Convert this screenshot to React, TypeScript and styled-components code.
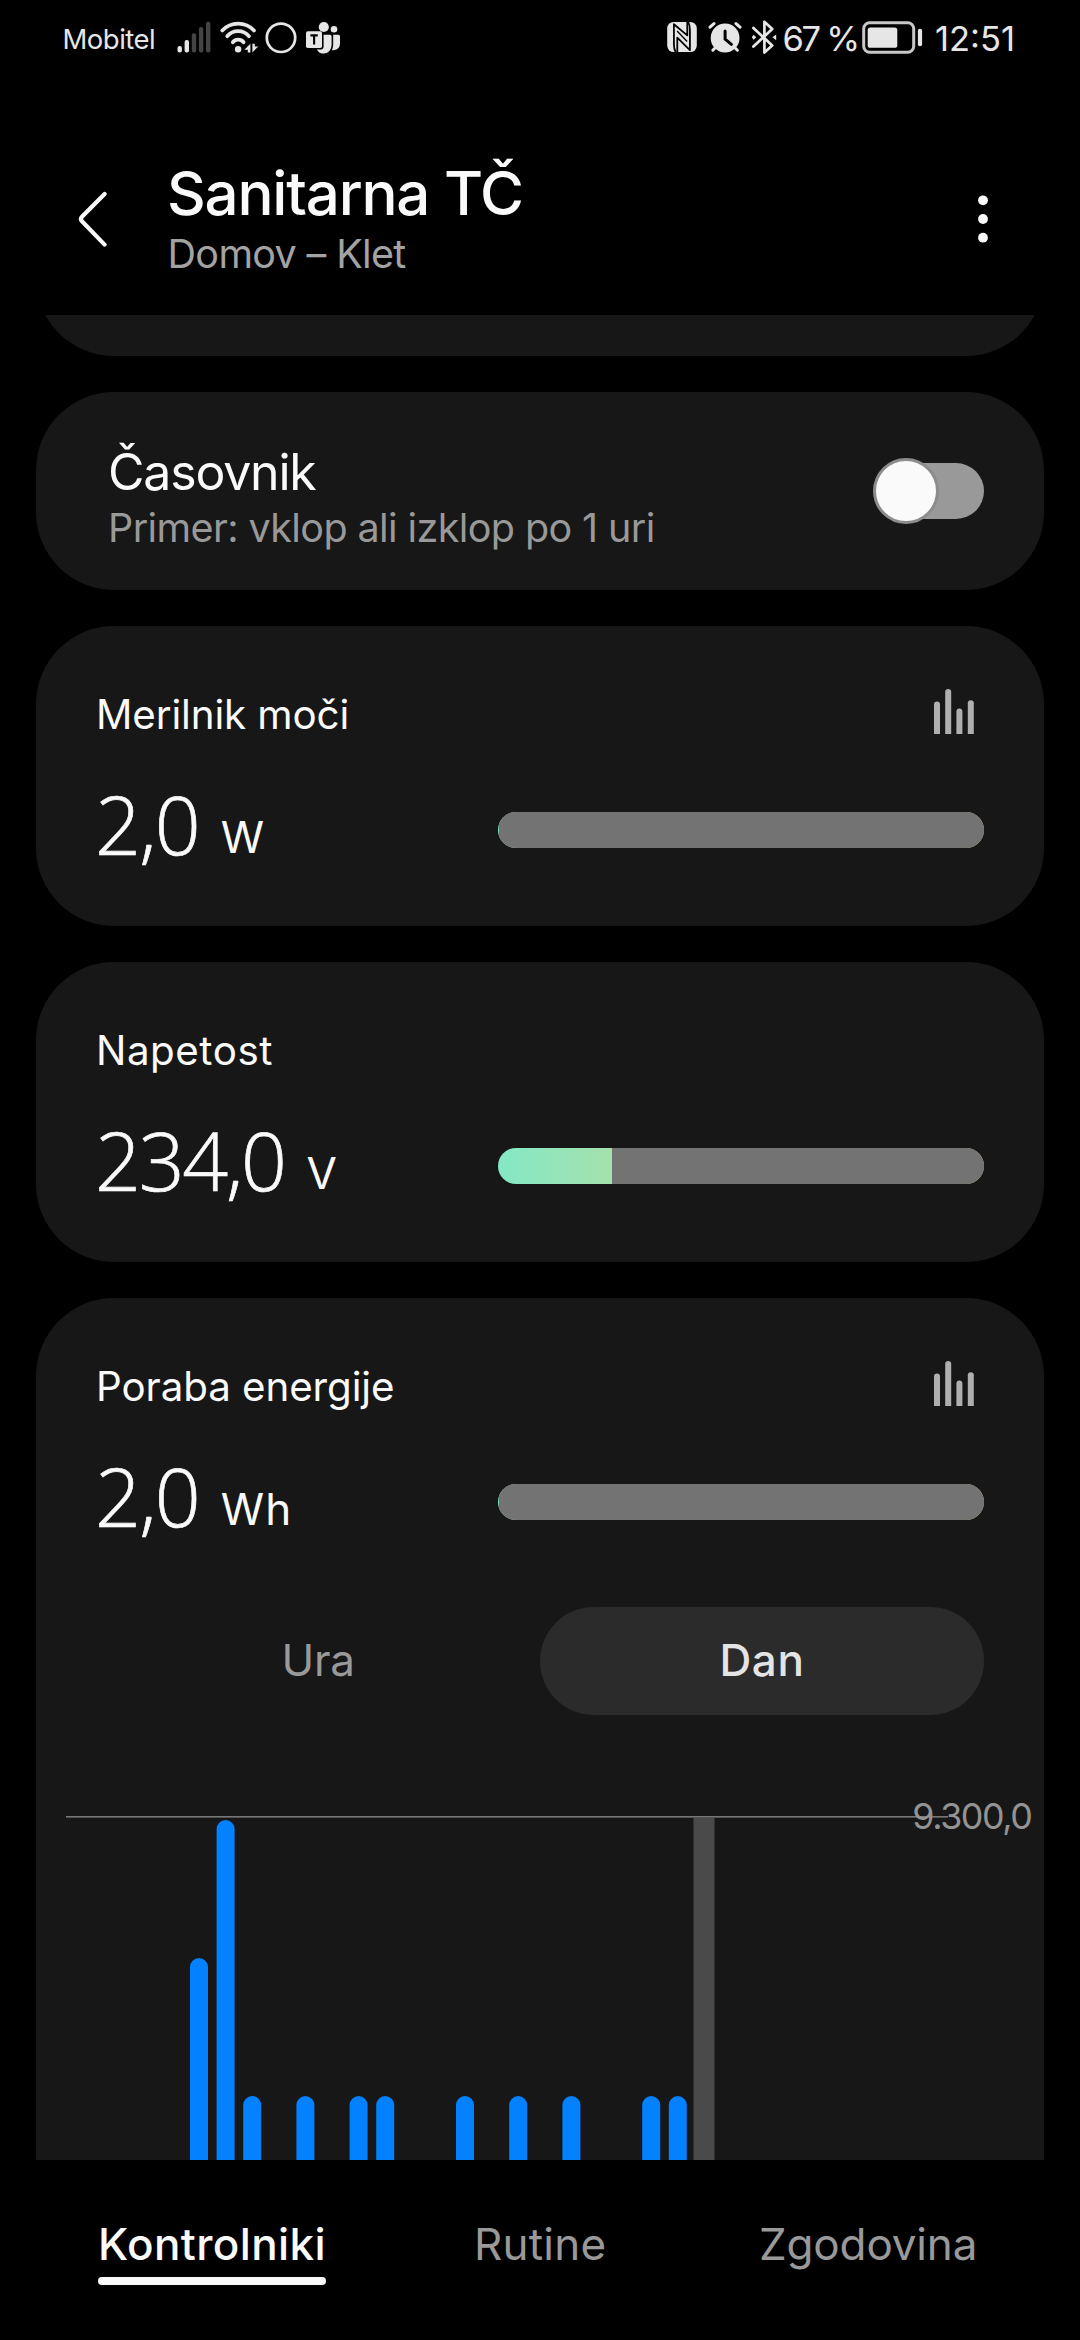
import React from "react";
import styled, { createGlobalStyle } from "styled-components";

const INK = "#fafafa";
const CARD = "#171717";
const MUTED = "#999999";
const STATUS = "#e6e6e6";

const GlobalStyle = createGlobalStyle`
  body {
    margin: 0;
    background: #000;
    color: ${INK};
    font-family: Inter, "Noto Sans", sans-serif;
  }
`;

const Screen = styled.div`
  width: 1080px;
  height: 2340px;
  display: flex;
  flex-direction: column;
  background: #000;
  overflow: hidden;
`;

/* ---------- status bar ---------- */

const StatusBar = styled.div`
  height: 78px;
  box-sizing: border-box;
  padding: 0 67px 0 62.5px;
  display: flex;
  justify-content: space-between;
  align-items: center;
  color: ${STATUS};
`;

const StatusGroup = styled.div`
  display: flex;
  align-items: center;
`;

const Label = styled.span<{ $size: number; $spacing?: number; $weight?: number }>`
  font-size: ${(p) => p.$size}px;
  font-weight: ${(p) => p.$weight ?? 400};
  letter-spacing: ${(p) => p.$spacing ?? 0}px;
  line-height: 40px;
  white-space: pre;
`;

const Carrier = styled(Label)`
  width: 114.5px;
`;

const Percent = styled(Label)`
  width: 79.5px;
`;

const Clock = styled(Label)`
  width: 78px;
`;

const StatusIcon = styled.svg<{ $gap?: number }>`
  display: block;
  flex: none;
  margin-right: ${(p) => p.$gap ?? 0}px;
`;

const SignalIcon = () => (
  <StatusIcon width={34} height={38} viewBox="177 20 34 38" $gap={9}>
    <rect x="177.5" y="46" width="4.4" height="6.4" rx="2" fill={STATUS} />
    <rect x="184.6" y="40" width="4.4" height="12.4" rx="2" fill={STATUS} />
    <rect x="191.8" y="33.3" width="4.4" height="19.1" rx="2" fill="#444" />
    <rect x="198.9" y="27" width="4.4" height="25.4" rx="2" fill="#444" />
    <rect x="206" y="21.7" width="4.4" height="30.7" rx="2" fill="#444" />
  </StatusIcon>
);

const WifiIcon = () => (
  <StatusIcon width={39} height={38} viewBox="220 20 39 38" $gap={6}>
    <g fill="none" stroke={STATUS} strokeWidth="3.7" strokeLinecap="round">
      <path d="M222.3 30.5A21.6 21.6 0 0 1 254 30.5" />
      <path d="M227.2 36.2A14.4 14.4 0 0 1 249 36.2" />
      <path d="M232.8 42.2A7 7 0 0 1 243.6 42.2" />
    </g>
    <circle cx="238.1" cy="49.3" r="3.2" fill={STATUS} />
    <path d="M250.4 43.8V52.4H247.8V49.8H244.4ZM252.4 52.4V43.8H254.8V46.6H258.2Z" fill={STATUS} />
  </StatusIcon>
);

const RingIcon = () => (
  <StatusIcon width={32} height={38} viewBox="265 20 32 38" $gap={8}>
    <circle cx="281" cy="37.8" r="14.2" fill="none" stroke={STATUS} strokeWidth="2.7" />
  </StatusIcon>
);

const TeamsIcon = () => (
  <StatusIcon width={36} height={38} viewBox="305 20 36 38">
    <g fill={STATUS}>
      <circle cx="323.8" cy="27" r="5.1" />
      <circle cx="334" cy="29.2" r="3.3" />
      <path d="M333.2 34.8H338.6Q340 34.8 340 36.4V43.5Q340 49.5 333.6 50.2H332Q333.2 47.5 333.2 44.5Z" />
      <path d="M323.6 34.8H330.2Q331.6 34.8 331.6 36.4V45Q331.2 52.5 324 53.6Q319 53.6 316.8 49.4H321Q323.6 49.4 323.6 46.6Z" />
      <rect x="306" y="31.2" width="16" height="16.8" rx="1.8" />
    </g>
    <path d="M310.4 35.4H317.8M314.1 35.4V44.4" stroke="#000" strokeWidth="2.1" fill="none" />
  </StatusIcon>
);

const NfcIcon = () => (
  <StatusIcon width={30} height={38} viewBox="666.5 20 30 38" $gap={10.5}>
    <rect x="666.7" y="22" width="29.6" height="30" rx="6.4" fill={STATUS} />
    <g fill="none" stroke="#000" strokeWidth="2" strokeLinejoin="round">
      <path d="M675.2 52.4Q673.4 49 673.4 44V24.2L686.8 35.4V22" strokeWidth="1.8" />
      <path d="M687.6 21.6Q689.4 25 689.4 30V50.2L676.8 37.6V52" strokeWidth="1.8" />
      <path d="M676.6 31L686.6 41.4" strokeWidth="1.4" />
    </g>
  </StatusIcon>
);

const AlarmIcon = () => (
  <StatusIcon width={34} height={38} viewBox="707 20 34 38" $gap={9}>
    <g stroke={STATUS} strokeWidth="3" strokeLinecap="round">
      <path d="M709 27.2L713 23.6M739 27.2L735 23.6" />
      <path d="M711.8 50.2L714.8 47.2M736.4 50.2L733.4 47.2" />
    </g>
    <circle cx="724.1" cy="38" r="14.4" fill={STATUS} />
    <path d="M724.1 31V39.2L730.4 44.4" fill="none" stroke="#000" strokeWidth="3" strokeLinecap="round" strokeLinejoin="round" />
  </StatusIcon>
);

const BluetoothIcon = () => (
  <StatusIcon width={26} height={38} viewBox="750 20 26 38" $gap={6}>
    <path d="M752.4 28L771.2 45.4L763.4 52.6V21.8L771.2 29L752.4 46.6" fill="none" stroke={STATUS} strokeWidth="2.7" strokeLinejoin="round" strokeLinecap="round" />
    <path d="M750.8 37.3L752.6 34.8L755.2 37.3L752.6 39.8ZM775.2 34.4V40.2L771.4 37.3Z" fill={STATUS} />
  </StatusIcon>
);

const BatteryIcon = () => (
  <StatusIcon width={61} height={38} viewBox="861.5 20 61 38" $gap={12}>
    <rect x="863.2" y="22.8" width="50" height="29.4" rx="6" fill="none" stroke="#c8c8c8" strokeWidth="3" />
    <rect x="867.2" y="27.4" width="29.6" height="20.4" rx="2.6" fill={STATUS} />
    <rect x="917.4" y="28.8" width="4.2" height="17.4" rx="2" fill={STATUS} />
  </StatusIcon>
);

/* ---------- header ---------- */

const Header = styled.header`
  height: 237px;
  box-sizing: border-box;
  padding: 45px 92px 0 77px;
  display: flex;
  align-items: center;
`;

const Titles = styled.div`
  flex: 1;
  margin-left: 58px;
  padding-bottom: 3px;
  display: flex;
  flex-direction: column;
  gap: 9px;
`;

const Title = styled.h1`
  margin: 0;
  padding-left: 1px;
  font-size: 60px;
  font-weight: 500;
  line-height: 64px;
  letter-spacing: -1.2px;
`;

const Subtitle = styled.p`
  margin: 0;
  padding-left: 1.5px;
  font-size: 39.5px;
  line-height: 40px;
  letter-spacing: -0.65px;
  color: #a3a3a3;
`;

const Glyph = styled.svg`
  display: block;
  flex: none;
`;

/* ---------- cards ---------- */

const Scroll = styled.main`
  height: 1845px;
  box-sizing: border-box;
  padding: 0 36px;
  display: flex;
  flex-direction: column;
  gap: 36px;
  overflow: hidden;
`;

const Card = styled.section`
  flex: none;
  box-sizing: border-box;
  background: ${CARD};
  border-radius: 78px;
`;

const ScrolledCard = styled(Card)`
  height: 200px;
  margin-top: -159px;
`;

const TimerCard = styled(Card)`
  height: 198px;
  padding: 0 60px 0 72px;
  display: flex;
  justify-content: space-between;
  align-items: center;
`;

const TimerText = styled.div`
  padding-top: 12px;
  display: flex;
  flex-direction: column;
  gap: 11px;
`;

const TimerTitle = styled.div`
  font-size: 50px;
  line-height: 50px;
  letter-spacing: -1.2px;
`;

const TimerHint = styled.div`
  font-size: 39.5px;
  line-height: 40px;
  letter-spacing: -0.6px;
  color: ${MUTED};
  white-space: nowrap;
`;

const Switch = styled.div`
  width: 111px;
  height: 66px;
  display: flex;
  align-items: center;
`;

const Thumb = styled.div`
  box-sizing: border-box;
  width: 66px;
  height: 66px;
  flex: none;
  border: 3px solid #8c8c8c;
  border-radius: 50%;
  background: ${INK};
  z-index: 1;
`;

const Track = styled.div`
  flex: 1;
  height: 56px;
  margin-left: -58px;
  border-radius: 28px;
  background: ${MUTED};
`;

const SensorCard = styled(Card)<{ $open?: boolean }>`
  height: ${(p) => (p.$open ? 1080 : 300)}px;
  padding: 63px 60px 0;
`;

const SensorHead = styled.div`
  height: 50px;
  padding-right: 10px;
  display: flex;
  justify-content: space-between;
`;

const SensorName = styled.div<{ $spacing: number }>`
  font-size: 40.3px;
  line-height: 51px;
  letter-spacing: ${(p) => p.$spacing}px;
`;

const SensorBody = styled.div`
  height: 110px;
  margin-top: 36px;
  display: flex;
  justify-content: space-between;
`;

const Value = styled.div<{ $spacing: number }>`
  margin-left: -1px;
  font-family: "Open Sans", "Noto Sans", sans-serif;
  font-size: 80.5px;
  font-weight: 300;
  line-height: 98px;
  letter-spacing: ${(p) => p.$spacing}px;
  -webkit-text-stroke: 0.7px ${INK};
  white-space: nowrap;
`;

const Unit = styled.span<{ $spacing?: number }>`
  margin-left: 22px;
  font-family: Inter, "Noto Sans", sans-serif;
  font-size: 44px;
  font-weight: 400;
  line-height: 0;
  vertical-align: 2px;
  letter-spacing: ${(p) => p.$spacing ?? 0}px;
  -webkit-text-stroke: 0;
`;

const Meter = styled.div`
  width: 486px;
  height: 36px;
  margin-top: 37px;
  display: flex;
  justify-content: flex-end;
  border-radius: 18px;
  overflow: hidden;
  background: linear-gradient(90deg, #84e8c6 0, #a4e1ac 114px, #d5d78a 280px, #f0b070 100%);
`;

const MeterRest = styled.div`
  height: 36px;
  background: #737373;
`;

const ChartIcon = () => (
  <Glyph width={40} height={45} viewBox="0 0 40 45" fill="#afafaf">
    <path d="M0 45V15.4A3 3 0 0 1 6 15.4V45Z" />
    <path d="M11.2 45V3A3 3 0 0 1 17.2 3V45Z" />
    <path d="M22.4 45V22.6A3 3 0 0 1 28.4 22.6V45Z" />
    <path d="M33.8 45V14.2A3 3 0 0 1 39.8 14.2V45Z" />
  </Glyph>
);

const Periods = styled.div`
  height: 108px;
  margin-top: 50px;
  display: grid;
  grid-template-columns: 1fr 1fr;
`;

const Period = styled.button<{ $active?: boolean }>`
  border: 0;
  padding: 0 0 2px;
  border-radius: 54px;
  background: ${(p) => (p.$active ? "#2b2b2b" : "transparent")};
  color: ${(p) => (p.$active ? "#e4e4e4" : MUTED)};
  font-family: inherit;
  font-size: 44px;
  font-weight: ${(p) => (p.$active ? 500 : 400)};
  letter-spacing: ${(p) => (p.$active ? 0.6 : -0.3)}px;
`;

const Chart = styled.div`
  position: relative;
  margin: 0 -60px;
`;

const ChartMax = styled.span`
  position: absolute;
  top: 81px;
  right: 12.5px;
  font-size: 35.8px;
  line-height: 40px;
  letter-spacing: -1.4px;
  color: #939393;
`;

const BAR_PITCH = 26.6;
const bars: [number, number][] = [
  [0, 243], [1, 105], [2, 381], [4, 381], [6, 381], [7, 381],
  [10, 381], [12, 381], [14, 381], [17, 381], [18, 381],
];

const EnergyChart = () => (
  <Chart>
    <Glyph width={1008} height={480} viewBox="0 0 1008 480">
      <rect x="657.5" y="102" width="21" height="378" fill="#4a4a4a" />
      <rect x="30" y="101" width="882" height="1" fill="#777" />
      <rect x="30" y="102" width="882" height="1" fill="#515151" />
      {bars.map(([slot, top]) => (
        <rect key={slot} x={154 + slot * BAR_PITCH} y={top} width="18" height={520 - top} rx="9" fill="#0381fe" />
      ))}
    </Glyph>
    <ChartMax>9.300,0</ChartMax>
  </Chart>
);

/* ---------- bottom tabs ---------- */

const Tabs = styled.nav`
  flex: 1;
  padding: 59px 0 0 98px;
  display: grid;
  grid-template-columns: 376px 285px auto;
  align-items: start;
  justify-content: start;
`;

const Tab = styled.a<{ $active?: boolean; $spacing: number }>`
  justify-self: start;
  width: ${(p) => (p.$active ? "228px" : "auto")};
  height: 66px;
  box-sizing: border-box;
  font-size: 44px;
  line-height: 50px;
  font-weight: ${(p) => (p.$active ? 500 : 400)};
  letter-spacing: ${(p) => p.$spacing}px;
  color: ${(p) => (p.$active ? INK : MUTED)};
  white-space: nowrap;
`;

const Underline = styled.div`
  height: 8px;
  margin-top: 8px;
  border-radius: 4px;
  background: ${INK};
`;

interface SensorProps {
  name: string;
  nameSpacing: number;
  value: string;
  valueSpacing: number;
  unit: string;
  unitSpacing?: number;
  fill: number;
  chart?: boolean;
  children?: React.ReactNode;
}

const Sensor = (p: SensorProps) => (
  <SensorCard $open={!!p.children}>
    <SensorHead>
      <SensorName $spacing={p.nameSpacing}>{p.name}</SensorName>
      {p.chart && <ChartIcon />}
    </SensorHead>
    <SensorBody>
      <Value $spacing={p.valueSpacing}>
        {p.value}
        <Unit $spacing={p.unitSpacing}>{p.unit}</Unit>
      </Value>
      <Meter>
        <MeterRest style={{ width: `${100 - p.fill}%` }} />
      </Meter>
    </SensorBody>
    {p.children}
  </SensorCard>
);

export default function App() {
  return (
    <>
      <GlobalStyle />
      <Screen>
        <StatusBar>
          <StatusGroup>
            <Carrier $size={27.5} $spacing={-0.5}>Mobitel</Carrier>
            <SignalIcon />
            <WifiIcon />
            <RingIcon />
            <TeamsIcon />
          </StatusGroup>
          <StatusGroup>
            <NfcIcon />
            <AlarmIcon />
            <BluetoothIcon />
            <Percent $size={34.5} $spacing={-2.3}>67 %</Percent>
            <BatteryIcon />
            <Clock $size={34.5}>12:51</Clock>
          </StatusGroup>
        </StatusBar>

        <Header>
          <Glyph width={31} height={60} viewBox="77 189 31 60">
            <path d="M104.6 194L82.2 216.4Q79.6 219 82.2 221.6L104.6 244.6" fill="none" stroke={INK} strokeWidth="4.2" strokeLinecap="round" />
          </Glyph>
          <Titles>
            <Title>Sanitarna TČ</Title>
            <Subtitle>Domov – Klet</Subtitle>
          </Titles>
          <Glyph width={10} height={48} viewBox="0 0 10 48" fill={INK}>
            <circle cx="5" cy="5.3" r="4.9" />
            <circle cx="5" cy="24" r="4.9" />
            <circle cx="5" cy="42.7" r="4.9" />
          </Glyph>
        </Header>

        <Scroll>
          <ScrolledCard />
          <TimerCard>
            <TimerText>
              <TimerTitle>Časovnik</TimerTitle>
              <TimerHint>Primer: vklop ali izklop po 1 uri</TimerHint>
            </TimerText>
            <Switch>
              <Thumb />
              <Track />
            </Switch>
          </TimerCard>
          <Sensor name="Merilnik moči" nameSpacing={-0.1} value="2,0" valueSpacing={-1.8} unit="W" fill={0.2} chart />
          <Sensor name="Napetost" nameSpacing={0.55} value="234,0" valueSpacing={-2.3} unit="V" fill={23.4} />
          <Sensor name="Poraba energije" nameSpacing={-0.07} value="2,0" valueSpacing={-1.8} unit="Wh" unitSpacing={1} fill={0.2} chart>
            <Periods>
              <Period>Ura</Period>
              <Period $active>Dan</Period>
            </Periods>
            <EnergyChart />
          </Sensor>
        </Scroll>

        <Tabs>
          <Tab $active $spacing={0.4}>
            Kontrolniki
            <Underline />
          </Tab>
          <Tab $spacing={0.2}>Rutine</Tab>
          <Tab $spacing={-0.15}>Zgodovina</Tab>
        </Tabs>
      </Screen>
    </>
  );
}
